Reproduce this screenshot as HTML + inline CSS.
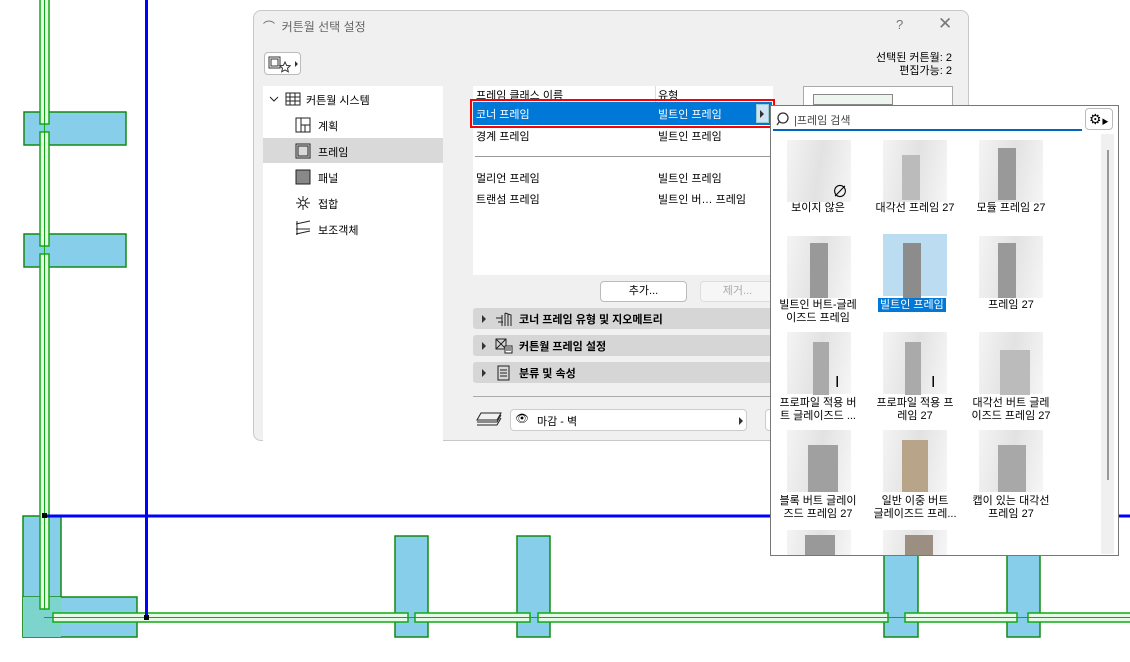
<!DOCTYPE html>
<html><head><meta charset="utf-8">
<style>
*{margin:0;padding:0;box-sizing:border-box}
body{width:1130px;height:662px;position:relative;overflow:hidden;background:#fff;font-family:"Liberation Sans","Noto Sans CJK KR",sans-serif;font-size:11px;color:#000}
.a{position:absolute;white-space:nowrap}
.dlg{left:253px;top:10px;width:716px;height:431px;background:#f0f0f0;border:1px solid #c8c8c8;border-radius:8px}
.sec{position:absolute;left:473px;width:300px;height:21px;background:#d6d6d6;border-radius:3px;font-weight:bold}
.sec .t{position:absolute;left:46px;top:3px}
.tri{position:absolute;left:9px;top:7px;width:0;height:0;border-left:4px solid #333;border-top:4px solid transparent;border-bottom:4px solid transparent}
.th{position:absolute;width:64px;height:62px;background:linear-gradient(100deg,#f4f4f4,#e2e2e2 50%,#f6f6f6)}
.lb{position:absolute;width:96px;text-align:center;line-height:13px;font-size:11px}
</style></head><body>
<svg class="a" style="left:0;top:0" width="1130" height="662">
<g fill="#87ceeb" stroke="#128a12" stroke-width="1.5">
<rect x="24" y="112" width="102" height="33"/>
<rect x="24" y="234" width="102" height="33"/>
<rect x="23" y="516" width="38" height="121"/>
<rect x="23" y="597" width="114" height="40"/>
<rect x="395" y="536" width="33" height="101"/>
<rect x="517" y="536" width="33" height="101"/>
<rect x="884" y="536" width="34" height="101"/>
<rect x="1007" y="536" width="33" height="101"/>
</g>
<rect x="23" y="597" width="38" height="40" fill="#7cd4cc"/>
<g fill="#e6fbe6" stroke="#14a814" stroke-width="1.5">
<rect x="40" y="-2" width="9" height="126"/>
<rect x="40" y="132" width="9" height="114"/>
<rect x="40" y="254" width="9" height="355"/>
<rect x="53" y="613" width="355" height="9"/>
<rect x="415" y="613" width="115" height="9"/>
<rect x="538" y="613" width="350" height="9"/>
<rect x="905" y="613" width="112" height="9"/>
<rect x="1028" y="613" width="110" height="9"/>
</g>
<g stroke="#14a814" stroke-width="1"><line x1="44.5" y1="0" x2="44.5" y2="610"/><line x1="44" y1="617.5" x2="1130" y2="617.5"/></g>
<line x1="146.5" y1="0" x2="146.5" y2="617" stroke="#0000ff" stroke-width="3"/>
<line x1="44" y1="516" x2="1130" y2="516" stroke="#0000ff" stroke-width="3"/>
<rect x="42" y="513" width="5" height="5" fill="#000"/><rect x="144" y="615" width="5" height="5" fill="#000"/>
</svg>

<div class="a dlg"></div>
<div class="a" style="left:263px;top:18px;color:#666;font-size:12px">⌒ &nbsp;커튼월 선택 설정</div>
<div class="a" style="left:896px;top:17px;color:#777;font-size:13px">?</div>
<div class="a" style="left:938px;top:14px;color:#777;font-size:17px">✕</div>
<div class="a" style="left:264px;top:52px;width:37px;height:23px;background:#fff;border:1px solid #bbb;border-radius:4px"></div>
<svg class="a" style="left:268px;top:55px" width="32" height="18"><rect x="1" y="2" width="11" height="11" fill="none" stroke="#333"/><rect x="3" y="4" width="7" height="7" fill="none" stroke="#333"/><path d="M17 7l1.6 3.4 3.6.4-2.7 2.4.8 3.6-3.3-1.9-3.3 1.9.8-3.6-2.7-2.4 3.6-.4z" fill="#fff" stroke="#333"/><path d="M27 6l3 3-3 3z" fill="#333"/></svg>
<div class="a" style="right:178px;top:52px;text-align:right;line-height:13px">선택된 커튼월: 2<br>편집가능: 2</div>

<div class="a" style="left:263px;top:86px;width:180px;height:355px;background:#fff"></div>
<div class="a" style="left:263px;top:138px;width:180px;height:25px;background:#d9d9d9"></div>
<svg class="a" style="left:268px;top:90px" width="180" height="150" fill="none" stroke="#222">
<path d="M2 7l4 4 4-4"/>
<rect x="18" y="3" width="14" height="12"/><path d="M18 7h14M18 11h14M22 3v12M27 3v12"/>
<rect x="28" y="28" width="14" height="14"/><path d="M33 28v14M33 35h9M37 35v7"/>
<rect x="28" y="54" width="14" height="14"/><rect x="30" y="56" width="10" height="10"/>
<rect x="28" y="80" width="14" height="14" fill="#888"/>
<path d="M35 106v14M28 113h14M30 108l10 10M40 108l-10 10"/><circle cx="35" cy="113" r="2.5" fill="#fff"/>
<path d="M28 134l14-3M28 139h14M28 144l14 -3M29 131v14"/>
</svg>
<div class="a" style="left:306px;top:92px">커튼월 시스템</div>
<div class="a" style="left:318px;top:118px">계획</div>
<div class="a" style="left:318px;top:144px">프레임</div>
<div class="a" style="left:318px;top:170px">패널</div>
<div class="a" style="left:318px;top:196px">접합</div>
<div class="a" style="left:318px;top:222px">보조객체</div>

<div class="a" style="left:473px;top:86px;width:300px;height:189px;background:#fff"></div>
<div class="a" style="left:655px;top:86px;width:1px;height:16px;background:#ddd"></div>
<div class="a" style="left:476px;top:87px">프레임 클래스 이름</div><div class="a" style="left:658px;top:87px">유형</div>
<div class="a" style="left:470px;top:99px;width:305px;height:29px;border:2px solid #f00"></div>
<div class="a" style="left:473px;top:102px;width:299px;height:23px;background:#0078d7;color:#fff"><span class="a" style="left:3px;top:4px">코너 프레임</span><span class="a" style="left:185px;top:4px">빌트인 프레임</span><span class="a" style="left:283px;top:2px;width:13px;height:19px;background:#cde4f7;border:1px solid #9cc"></span><span class="a" style="left:287px;top:8px;border-left:4px solid #333;border-top:4px solid transparent;border-bottom:4px solid transparent"></span></div>
<div class="a" style="left:476px;top:128px">경계 프레임</div><div class="a" style="left:658px;top:128px">빌트인 프레임</div>
<div class="a" style="left:475px;top:156px;width:295px;height:1px;background:#999"></div>
<div class="a" style="left:476px;top:170px">멀리언 프레임</div><div class="a" style="left:658px;top:170px">빌트인 프레임</div>
<div class="a" style="left:476px;top:191px">트랜섬 프레임</div><div class="a" style="left:658px;top:191px">빌트인 버… 프레임</div>

<div class="a" style="left:600px;top:281px;width:87px;height:21px;background:#fff;border:1px solid #bbb;border-radius:4px;text-align:center;line-height:19px">추가...</div>
<div class="a" style="left:700px;top:281px;width:75px;height:21px;background:#f6f6f6;border:1px solid #ddd;border-radius:4px;text-align:center;line-height:19px;color:#aaa">제거...</div>
<div class="sec" style="top:308px"><div class="tri"></div><svg class="a" style="left:21px;top:2px" width="20" height="17" fill="none" stroke="#222"><path d="M2 8h6M4 12h5M8 5v11M11 3l6 2v11M11 3v13M14 4v12"/></svg><span class="t">코너 프레임 유형 및 지오메트리</span></div>
<div class="sec" style="top:335px"><div class="tri"></div><svg class="a" style="left:21px;top:2px" width="20" height="17" fill="none" stroke="#222"><rect x="2" y="2" width="10" height="10"/><path d="M2 2l10 10M12 2l-10 10"/><rect x="11" y="9" width="7" height="7" fill="#fff"/><path d="M12 11h5M12 13h5"/></svg><span class="t">커튼월 프레임 설정</span></div>
<div class="sec" style="top:362px"><div class="tri"></div><svg class="a" style="left:21px;top:2px" width="20" height="17" fill="none" stroke="#222"><rect x="4" y="2" width="11" height="14"/><path d="M6 6h7M6 9h7M6 12h7"/></svg><span class="t">분류 및 속성</span></div>
<div class="a" style="left:473px;top:396px;width:300px;height:1px;background:#aaa"></div>
<svg class="a" style="left:475px;top:411px" width="28" height="18" fill="none" stroke="#222"><path d="M6 2h20l-4 7H2z"/><path d="M2 11h20l4-7M2 14h20l4-7"/></svg>
<div class="a" style="left:510px;top:409px;width:237px;height:22px;background:#fff;border:1px solid #ccc;border-radius:4px"><span class="a" style="left:4px;top:2px">👁</span><span class="a" style="left:26px;top:3px">마감 - 벽</span><span class="a" style="left:228px;top:7px;border-left:4px solid #333;border-top:4px solid transparent;border-bottom:4px solid transparent"></span></div>
<div class="a" style="left:765px;top:409px;width:10px;height:22px;background:#fff;border:1px solid #ccc;border-radius:4px 0 0 4px"></div>
<div class="a" style="left:803px;top:86px;width:150px;height:20px;background:#fff;border:1px solid #aaa"></div>
<div class="a" style="left:813px;top:94px;width:80px;height:11px;background:#eef5ee;border:1px solid #888"></div>

<div class="a" style="left:770px;top:105px;width:349px;height:451px;background:#fff;border:1px solid #777"></div>
<div class="a" style="left:773px;top:108px;width:309px;height:23px;border-bottom:2px solid #0067c0"></div>
<svg class="a" style="left:776px;top:111px" width="16" height="16" fill="none" stroke="#333" stroke-width="1.3"><circle cx="7" cy="7" r="5"/><path d="M3.5 10.5L1 14"/></svg>
<div class="a" style="left:794px;top:112px;color:#444">|프레임 검색</div>
<div class="a" style="left:1085px;top:108px;width:28px;height:22px;border:1px solid #bbb;border-radius:4px;font-size:14px;line-height:20px;padding-left:3px">⚙<span style="font-size:7px">▶</span></div>
<div class="a" style="left:1101px;top:134px;width:13px;height:420px;background:#f0f0f0"></div>
<div class="a" style="left:1107px;top:150px;width:2px;height:330px;background:#999"></div>

<div class="th" style="left:787px;top:140px"></div><div class="a" style="left:832px;top:178px;font-size:16px">∅</div>
<div class="th" style="left:883px;top:140px"></div><div class="a" style="left:902px;top:155px;width:18px;height:45px;background:#bbb"></div>
<div class="th" style="left:979px;top:140px"></div><div class="a" style="left:998px;top:148px;width:18px;height:52px;background:#999"></div>
<div class="lb" style="left:770px;top:202px">보이지 않은</div>
<div class="lb" style="left:867px;top:202px">대각선 프레임 27</div>
<div class="lb" style="left:963px;top:202px">모듈 프레임 27</div>

<div class="th" style="left:787px;top:236px"></div><div class="a" style="left:810px;top:243px;width:18px;height:55px;background:#999"></div>
<div class="th" style="left:883px;top:234px;background:#bcdcf2"></div><div class="a" style="left:903px;top:243px;width:18px;height:55px;background:#8c8c8c"></div>
<div class="th" style="left:979px;top:236px"></div><div class="a" style="left:998px;top:243px;width:18px;height:55px;background:#999"></div>
<div class="lb" style="left:770px;top:299px">빌트인 버트-글레<br>이즈드 프레임</div>
<div class="a" style="left:878px;top:298px;background:#0078d7;color:#fff;padding:0 2px;line-height:14px">빌트인 프레임</div>
<div class="lb" style="left:963px;top:299px">프레임 27</div>

<div class="th" style="left:787px;top:332px"></div><div class="a" style="left:813px;top:342px;width:16px;height:53px;background:#aaa"></div><div class="a" style="left:835px;top:374px;font-size:16px">I</div>
<div class="th" style="left:883px;top:332px"></div><div class="a" style="left:905px;top:342px;width:16px;height:53px;background:#aaa"></div><div class="a" style="left:931px;top:374px;font-size:16px">I</div>
<div class="th" style="left:979px;top:332px"></div><div class="a" style="left:1000px;top:350px;width:30px;height:45px;background:#bbb"></div>
<div class="lb" style="left:770px;top:397px">프로파일 적용 버<br>트 글레이즈드 ...</div>
<div class="lb" style="left:867px;top:397px">프로파일 적용 프<br>레임 27</div>
<div class="lb" style="left:963px;top:397px">대각선 버트 글레<br>이즈드 프레임 27</div>

<div class="th" style="left:787px;top:430px"></div><div class="a" style="left:808px;top:445px;width:30px;height:47px;background:#a0a0a0"></div>
<div class="th" style="left:883px;top:430px"></div><div class="a" style="left:902px;top:440px;width:26px;height:52px;background:#b8a488"></div>
<div class="th" style="left:979px;top:430px"></div><div class="a" style="left:998px;top:445px;width:28px;height:47px;background:#a8a8a8"></div>
<div class="lb" style="left:770px;top:495px">블록 버트 글레이<br>즈드 프레임 27</div>
<div class="lb" style="left:867px;top:495px">일반 이중 버트<br>글레이즈드 프레...</div>
<div class="lb" style="left:963px;top:495px">캡이 있는 대각선<br>프레임 27</div>

<div class="th" style="left:787px;top:530px;height:25px"></div><div class="a" style="left:805px;top:535px;width:30px;height:20px;background:#999"></div>
<div class="th" style="left:883px;top:530px;height:25px"></div><div class="a" style="left:905px;top:535px;width:28px;height:20px;background:#9a8f80"></div>
</body></html>
